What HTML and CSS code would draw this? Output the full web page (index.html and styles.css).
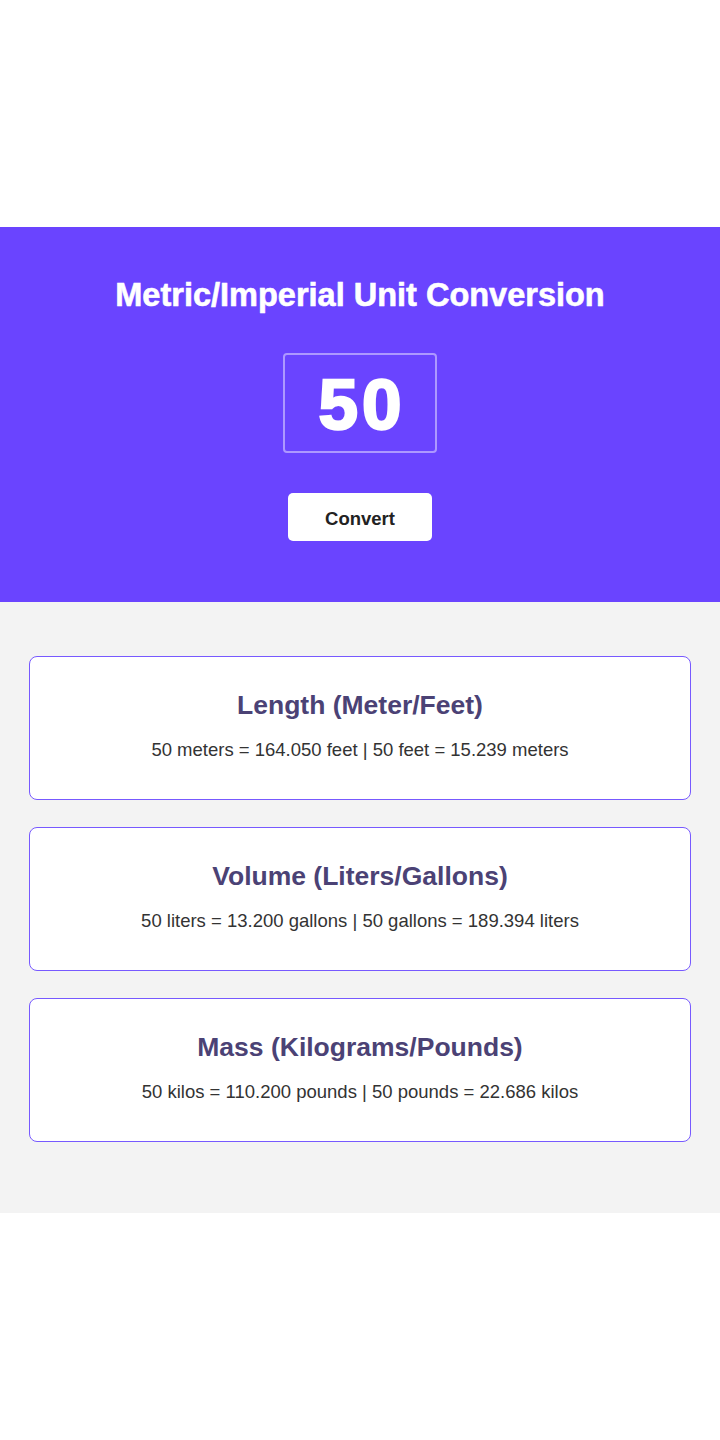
FILE: index.html
```html
<!DOCTYPE html>
<html lang="en">
<head>
<meta charset="utf-8">
<title>Metric/Imperial Unit Conversion</title>
<link rel="stylesheet" href="styles.css">
</head>
<body>
<main class="app">
  <header class="hero">
    <h1 class="hero-title">Metric/Imperial Unit Conversion</h1>
    <div class="number-box"><span class="number-value">50</span></div>
    <button class="convert-btn" type="button">Convert</button>
  </header>
  <section class="results">
    <div class="card">
      <h2 class="card-title">Length (Meter/Feet)</h2>
      <p class="card-text">50 meters = 164.050 feet | 50 feet = 15.239 meters</p>
    </div>
    <div class="card">
      <h2 class="card-title">Volume (Liters/Gallons)</h2>
      <p class="card-text">50 liters = 13.200 gallons | 50 gallons = 189.394 liters</p>
    </div>
    <div class="card">
      <h2 class="card-title">Mass (Kilograms/Pounds)</h2>
      <p class="card-text">50 kilos = 110.200 pounds | 50 pounds = 22.686 kilos</p>
    </div>
  </section>
</main>
</body>
</html>
```
FILE: styles.css
```css
* { box-sizing: border-box; }
html, body { margin: 0; padding: 0; }
body {
  min-height: 100vh;
  display: flex;
  flex-direction: column;
  justify-content: center;
  background: #ffffff;
  font-family: "Liberation Sans", Arial, sans-serif;
}
.app { width: 100%; }
.hero {
  background: #6a44ff;
  display: flex;
  flex-direction: column;
  align-items: center;
  padding: 46px 0 61px;
}
.hero-title {
  margin: 0;
  color: #ffffff;
  font-size: 32.5px;
  font-weight: 700;
  letter-spacing: 0;
  line-height: 44px;
  -webkit-text-stroke: 0.6px #ffffff;
}
.number-box {
  margin-top: 36px;
  width: 154px;
  height: 100px;
  border: 2px solid rgba(255,255,255,0.45);
  border-radius: 4px;
  display: flex;
  align-items: center;
  justify-content: center;
  padding-top: 2px;
}
.number-value {
  color: #ffffff;
  font-family: "Liberation Sans", Arial, sans-serif;
  font-weight: 700;
  font-size: 71px;
  letter-spacing: 4px;
  margin-right: -4px;
  -webkit-text-stroke: 2.5px #ffffff;
}
.convert-btn {
  margin-top: 40px;
  width: 144px;
  height: 48px;
  border: none;
  border-radius: 5px;
  background: #ffffff;
  color: #222222;
  font-family: "Liberation Sans", Arial, sans-serif;
  font-weight: 700;
  font-size: 18.5px;
  padding: 3px 0 0;
}
.results {
  background: #f3f3f3;
  padding: 54px 0 71px;
  display: flex;
  flex-direction: column;
  align-items: center;
  gap: 27px;
}
.card {
  width: 92%;
  height: 144px;
  background: #ffffff;
  border: 1.5px solid #7759ff;
  border-radius: 8px;
  display: flex;
  flex-direction: column;
  align-items: center;
  padding-top: 33px;
}
.card-title {
  margin: 0;
  color: #4b4275;
  font-size: 26.5px;
  font-weight: 700;
  line-height: 30px;
}
.card-text {
  margin: 18px 0 0;
  color: #333333;
  font-size: 18.5px;
  line-height: 24px;
}
```
